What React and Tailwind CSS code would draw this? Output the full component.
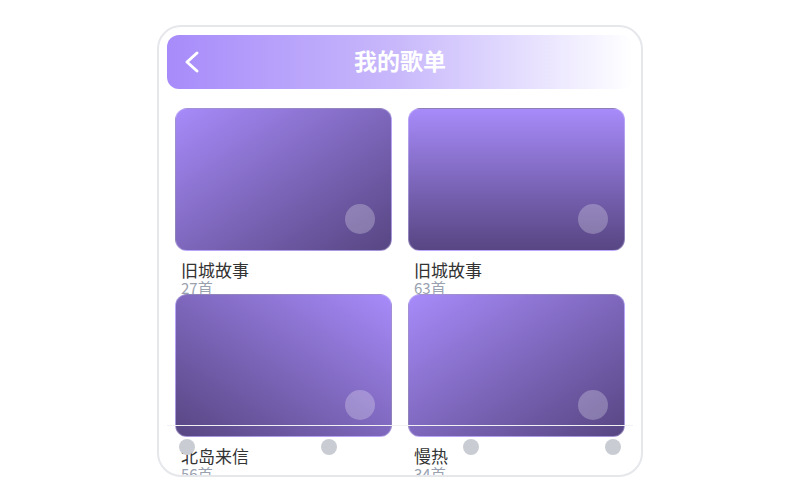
const playlists = [
  { name: "旧城故事", count: "27首", grad: "bg-linear-to-br" },
  { name: "旧城故事", count: "63首", grad: "bg-linear-to-b" },
  { name: "北岛来信", count: "56首", grad: "bg-linear-to-bl" },
  { name: "慢热", count: "34首", grad: "bg-linear-to-br" },
];

function PlaylistCard({ item }) {
  return (
    <div className="h-[170px] flex flex-col">
      <div
        className={`relative h-[143px] shrink-0 rounded-xl border border-violet-200/40 ${item.grad} from-[#a78bfa] to-[#574683]`}
      >
        <div className="absolute right-4 bottom-4 w-7.5 h-7.5 rounded-full bg-white/25" />
      </div>
      <div className="mt-2.5 pl-1.5">
        <div className="text-[17px] leading-[18px] text-[#333333]">{item.name}</div>
        <div className="text-[15px] leading-[18px] text-gray-400">{item.count}</div>
      </div>
    </div>
  );
}

export default function App() {
  return (
    <div
      className="w-[800px] h-[500px] bg-white pt-[25px]"
      style={{ fontFamily: '"Noto Sans CJK SC", "Noto Sans", sans-serif' }}
    >
      <div className="relative mx-auto w-[486px] h-[452px] border-2 border-gray-200 rounded-3xl bg-white overflow-hidden">
        <div className="p-2">
          <div className="relative h-[54px] rounded-xl bg-linear-to-r from-[#a78bfa] via-[#c9b9fb] to-[#ffffff] flex items-center justify-center">
            <svg
              className="absolute left-4 top-1/2 -translate-y-1/2"
              width="18"
              height="24"
              viewBox="0 0 18 24"
              fill="none"
            >
              <path
                d="M14 3 L4 12 L14 21"
                stroke="white"
                strokeWidth="3"
                strokeLinecap="round"
                strokeLinejoin="round"
              />
            </svg>
            <h1 className="-mt-1 text-[23px] font-bold text-white">我的歌单</h1>
          </div>
        </div>

        <div className="mt-[11px] px-4 grid grid-cols-2 gap-x-4 gap-y-4">
          {playlists.map((p, i) => (
            <PlaylistCard key={i} item={p} />
          ))}
        </div>

        <div className="absolute left-2 right-2 bottom-2 border-t border-[#f1f1f4] px-3 pt-[13px] pb-3 flex justify-between">
          <div className="w-4 h-4 rounded-full bg-[#c9cdd3]" />
          <div className="w-4 h-4 rounded-full bg-[#c9cdd3]" />
          <div className="w-4 h-4 rounded-full bg-[#c9cdd3]" />
          <div className="w-4 h-4 rounded-full bg-[#c9cdd3]" />
        </div>
      </div>
    </div>
  );
}
